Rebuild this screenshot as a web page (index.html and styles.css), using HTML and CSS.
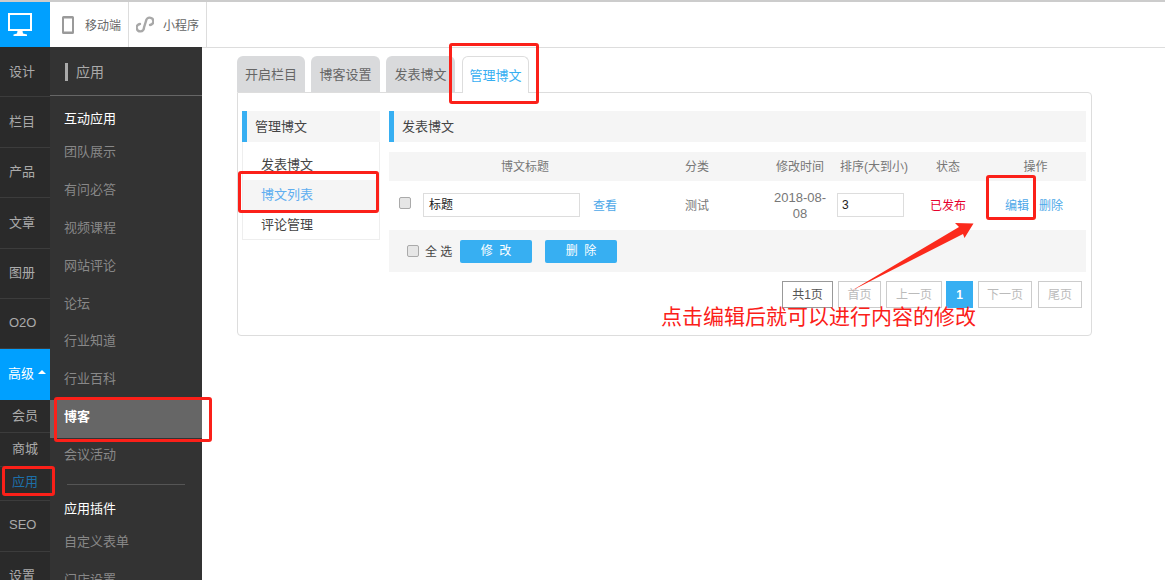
FILE: index.html
```html
<!DOCTYPE html>
<html lang="zh-CN">

<head>
    <meta charset="UTF-8">
    <title>管理博文</title>
    <link rel="stylesheet" href="styles.css">
</head>

<body>
    <header class="topbar">
        <div class="logo">
            <svg width="24" height="23" viewBox="0 0 24 23">
                <path fill="#fff" fill-rule="evenodd" d="M0 0h24v18H0zM2 2v14h20V2z" />
                <path fill="#fff" d="M9.500 18h5l.5 2.500 4 1V23H5.500v-1.500l3.500-1z" />
            </svg>
        </div>
        <div class="top-item top-phone">
            <svg width="12" height="18" viewBox="0 0 12 18">
                <path fill="#9a9a9a" fill-rule="evenodd" d="M1.500 0h9A1.500 1.500 0 0 1 12 1.500v15a1.500 1.500 0 0 1-1.500 1.500h-9A1.500 1.500 0 0 1 0 16.500v-15A1.500 1.500 0 0 1 1.500 0zM2 2.500v13h8v-13z" />
            </svg>
            <span>移动端</span>
        </div>
        <div class="top-item top-mini">
            <svg width="18" height="17" viewBox="0 0 18 17">
                <path fill="none" stroke="#a8a8a8" stroke-width="2.400" stroke-linecap="round" d="M4 8A3.700 3.700 0 1 0 8 11.500L10 5A3.700 3.700 0 1 1 14 9" />
            </svg>
            <span>小程序</span>
        </div>
    </header>

    <div class="layout">
        <nav class="nav">
            <a class="nav-item">设计</a>
            <a class="nav-item">栏目</a>
            <a class="nav-item">产品</a>
            <a class="nav-item">文章</a>
            <a class="nav-item">图册</a>
            <a class="nav-item">O2O</a>
            <a class="nav-item nav-open">高级<i class="caret"></i></a>
            <div class="nav-sub">
                <a class="nav-sub-item">会员</a>
                <a class="nav-sub-item">商城</a>
                <a class="nav-sub-item nav-sub-on">应用</a>
            </div>
            <a class="nav-item">SEO</a>
            <a class="nav-item">设置</a>
        </nav>

        <aside class="apps">
            <div class="apps-title"><span>应用</span></div>
            <h4 class="apps-group">互动应用</h4>
            <a class="apps-item">团队展示</a>
            <a class="apps-item">有问必答</a>
            <a class="apps-item">视频课程</a>
            <a class="apps-item">网站评论</a>
            <a class="apps-item">论坛</a>
            <a class="apps-item">行业知道</a>
            <a class="apps-item">行业百科</a>
            <a class="apps-item apps-on">博客</a>
            <a class="apps-item">会议活动</a>
            <div class="apps-line"></div>
            <h4 class="apps-group">应用插件</h4>
            <a class="apps-item">自定义表单</a>
            <a class="apps-item">门店设置</a>
        </aside>

        <main class="main">
            <div class="tabs">
                <a class="tab tab-a">开启栏目</a>
                <a class="tab tab-b">博客设置</a>
                <a class="tab tab-c">发表博文</a>
                <a class="tab tab-on">管理博文</a>
            </div>
            <section class="panel">
                <div class="side">
                    <div class="bar-title">管理博文</div>
                    <ul class="side-list">
                        <li>发表博文</li>
                        <li class="side-on">博文列表</li>
                        <li>评论管理</li>
                    </ul>
                </div>
                <div class="content">
                    <div class="bar-title bar-wide">发表博文</div>
                    <div class="row row-head">
                        <div>博文标题</div>
                        <div>分类</div>
                        <div class="col-time">修改时间</div>
                        <div>排序(大到小)</div>
                        <div>状态</div>
                        <div>操作</div>
                    </div>
                    <div class="row row-body">
                        <div class="col-title">
                            <span class="check"></span>
                            <span class="field field-title">标题</span>
                            <a class="link">查看</a>
                        </div>
                        <div>测试</div>
                        <div class="col-time col-date">2018-08-08</div>
                        <div><span class="field field-sort">3</span></div>
                        <div class="state">已发布</div>
                        <div class="col-ops"><a class="link">编辑</a><a class="link">删除</a></div>
                    </div>
                    <div class="batch">
                        <span class="check"></span>
                        <span class="all">全 选</span>
                        <a class="btn">修 改</a>
                        <a class="btn">删 除</a>
                    </div>
                    <div class="pager">
                        <a class="page page-total">共1页</a>
                        <a class="page page-first">首页</a>
                        <a class="page page-prev">上一页</a>
                        <a class="page page-on">1</a>
                        <a class="page page-next">下一页</a>
                        <a class="page page-last">尾页</a>
                    </div>
                </div>
            </section>
        </main>
    </div>

    <!-- 标注 -->
    <div class="mark mark-tab"></div>
    <div class="mark mark-list"></div>
    <div class="mark mark-blog"></div>
    <div class="mark mark-app"></div>
    <div class="mark mark-edit"></div>
    <svg class="arrow" width="1165" height="580" viewBox="0 0 1165 580">
        <polygon fill="#fb2a1c" points="851,291 959,227 955,223 973.500,223.500 964.500,238 963,234" />
    </svg>
    <div class="note">点击编辑后就可以进行内容的修改</div>
</body>

</html>
```

FILE: styles.css
```css
* {
    box-sizing: border-box;
}

html,
body {
    height: 580px;
    overflow: hidden;
}

body {
    margin: 0;
    position: relative;
    background: #fff;
    color: #666;
    font-family: "Liberation Sans", "Noto Sans CJK SC", sans-serif;
    font-size: 12px;
}

.topbar {
    display: flex;
    height: 48px;
    border-top: 2px solid #ccc;
    border-bottom: 1px solid #ddd;
}

.logo {
    width: 50px;
    display: flex;
    align-items: center;
    padding-left: 8px;
    background: #00a0ff;
}

.top-item {
    display: flex;
    align-items: center;
    height: 45px;
    border-right: 1px solid #ddd;
    color: #666;
}

.top-phone {
    width: 79px;
    padding-left: 12px;
    gap: 11px;
}

.top-mini {
    width: 78px;
    padding-left: 7px;
    gap: 9px;
}

.layout {
    position: relative;
    display: flex;
    height: 533px;
    margin-top: -1px;
}

.nav {
    width: 50px;
    flex: none;
    background: #2a2a2a;
}

.nav-item {
    display: flex;
    align-items: center;
    height: 50.400px;
    padding: 0 0 3px 9px;
    border-bottom: 1px solid #3c3c3c;
    color: #aaa;
    font-size: 13px;
}

.nav-open {
    padding: 0 0 5px 8px;
    background: #00a0ff;
    color: #fff;
    border-bottom: 0;
}

.caret {
    width: 0;
    height: 0;
    margin-left: 4px;
    border: 4px solid transparent;
    border-top: 0;
    border-bottom-color: #fff;
}

.nav-sub {
    border-bottom: 1px solid #3c3c3c;
}

.nav-sub-item {
    display: flex;
    align-items: center;
    justify-content: center;
    height: 33.500px;
    padding-bottom: 3px;
    color: #aaa;
    font-size: 13px;
    border-bottom: 1px solid #3c3c3c;
}

.nav-sub-item:last-child {
    padding-bottom: 5px;
    border-bottom: 0;
}

.nav-sub-on {
    color: #1d6fa8;
}

.apps {
    width: 152px;
    flex: none;
    background: #333;
}

.apps-title {
    height: 49px;
    padding: 16px 0 0 15px;
    border-bottom: 1px solid #666;
}

.apps-title span {
    display: block;
    height: 18px;
    padding-left: 8px;
    border-left: 3px solid #aaa;
    color: #aaa;
    font-size: 14px;
    line-height: 18px;
}

.apps-group {
    margin: 0;
    padding: 13px 0 6px 14px;
    color: #fff;
    font-size: 13px;
    font-weight: normal;
    line-height: 20px;
}

.apps-item {
    display: block;
    height: 37.900px;
    padding-left: 14px;
    color: #888;
    font-size: 13px;
    line-height: 34px;
}

.apps-on {
    background: #666;
    color: #fff;
    font-weight: bold;
}

.apps-line {
    width: 118px;
    height: 1px;
    margin: 8px 0 1px 17px;
    background: #555;
}

.main {
    flex: 1;
    padding: 9px 74px 0 35px;
}

.tabs {
    display: flex;
    height: 36px;
    align-items: flex-end;
}

.tab {
    height: 36px;
    margin-right: 6px;
    border-radius: 6px 6px 0 0;
    background: #d9dadc;
    color: #666;
    text-align: center;
    font-size: 13px;
    line-height: 37px;
}

.tab-a {
    width: 68px;
}

.tab-b {
    width: 69px;
}

.tab-c {
    width: 69px;
    margin-right: 7px;
}

.tab-on {
    position: relative;
    z-index: 1;
    width: 67px;
    height: 37px;
    margin-bottom: -1px;
    border: 1px solid #ddd;
    border-bottom: 0;
    background: #fff;
    color: #37aff2;
}

.panel {
    display: flex;
    height: 244px;
    padding: 18px 5px 0 4px;
    border: 1px solid #ddd;
    border-radius: 0 4px 4px 4px;
    color: #555;
    font-size: 12px;
}

.side {
    width: 138px;
    flex: none;
}

.bar-title {
    height: 31px;
    padding-left: 8px;
    border-left: 5px solid #37aff2;
    background: #f5f5f5;
    color: #444;
    font-size: 13px;
    line-height: 31px;
}

.side-list {
    height: 98px;
    margin: 0;
    padding: 8px 0 0;
    list-style: none;
    border: 1px solid #eee;
    border-top: 0;
}

.side-list li {
    height: 30px;
    padding-left: 18px;
    color: #444;
    font-size: 13px;
    line-height: 30px;
}

.side-list .side-on {
    background: #f5f5f5;
    color: #60aef0;
}

.content {
    width: 697px;
    margin-left: 9px;
    flex: none;
}

.row {
    display: grid;
    grid-template-columns: 272px 72px 104px 74px 74px 101px;
    text-align: center;
    align-items: center;
}

.row-head {
    height: 29px;
    margin-top: 10px;
    padding-bottom: 2px;
    background: #f5f5f5;
    color: #777;
}

.col-time {
    padding-left: 30px;
}

.col-date {
    padding: 0 5px 0 35px;
    font-size: 13px;
}

.row-body {
    height: 49px;
    color: #777;
    line-height: 16px;
}

.col-title {
    display: flex;
    align-items: center;
    padding-left: 10px;
}

.check {
    width: 12px;
    height: 12px;
    flex: none;
    border: 1px solid #aaa;
    border-radius: 2px;
    background: #e6e6e6;
}

.col-title .check {
    position: relative;
    top: -3px;
}

.field {
    display: block;
    height: 24px;
    margin-top: -1px;
    border: 1px solid #ddd;
    background: #fff;
    color: #222;
    text-align: left;
    line-height: 22px;
}

.field-title {
    width: 157px;
    margin: -2px 13px 0 12px;
    padding-left: 5px;
    font-size: 12px;
}

.field-sort {
    width: 67px;
    margin-top: -2px;
    padding-left: 4px;
}

.link {
    color: #4da8e8;
}

.state {
    color: #e6002d;
}

.col-ops {
    display: flex;
    gap: 10px;
    padding-left: 20px;
}

.batch {
    display: flex;
    align-items: center;
    height: 42px;
    padding-left: 18px;
    background: #f5f5f5;
}

.all {
    width: 35px;
    margin-left: 6px;
    padding-bottom: 2px;
    color: #444;
    white-space: pre;
}

.btn {
    width: 72px;
    height: 23px;
    margin-right: 13px;
    border-radius: 2px;
    background: #37aff2;
    color: #fff;
    text-align: center;
    word-spacing: 3px;
    line-height: 23px;
}

.pager {
    display: flex;
    justify-content: flex-end;
    gap: 5px;
    height: 27px;
    margin-top: 9px;
    padding-right: 4px;
}

.page {
    border: 1px solid #ccc;
    color: #bbb;
    text-align: center;
    line-height: 27px;
}

.page-total {
    width: 51px;
    border-color: #999;
    color: #555;
}

.page-first {
    width: 43px;
}

.page-prev {
    width: 56px;
}

.page-next {
    width: 54px;
}

.page-last {
    width: 44px;
    margin-left: 1px;
}

.page-on {
    width: 27px;
    margin-left: -1px;
    border: 0;
    background: #37aff2;
    color: #fff;
    font-weight: bold;
    line-height: 28px;
}

/* 标注层 */
.mark {
    position: absolute;
    border: 3px solid #fb2019;
    border-radius: 3px;
}

.mark-tab {
    left: 449px;
    top: 43px;
    width: 90px;
    height: 61px;
}

.mark-list {
    left: 238px;
    top: 171px;
    width: 141px;
    height: 42px;
}

.mark-blog {
    left: 54px;
    top: 397px;
    width: 158px;
    height: 45px;
}

.mark-app {
    left: 2px;
    top: 466px;
    width: 53px;
    height: 30px;
}

.mark-edit {
    left: 986px;
    top: 175px;
    width: 50px;
    height: 45px;
}

.arrow {
    position: absolute;
    left: 0;
    top: 0;
    pointer-events: none;
}

.note {
    position: absolute;
    left: 661px;
    top: 302px;
    color: #fb2019;
    font-size: 21px;
    line-height: 30px;
    white-space: nowrap;
}
```
